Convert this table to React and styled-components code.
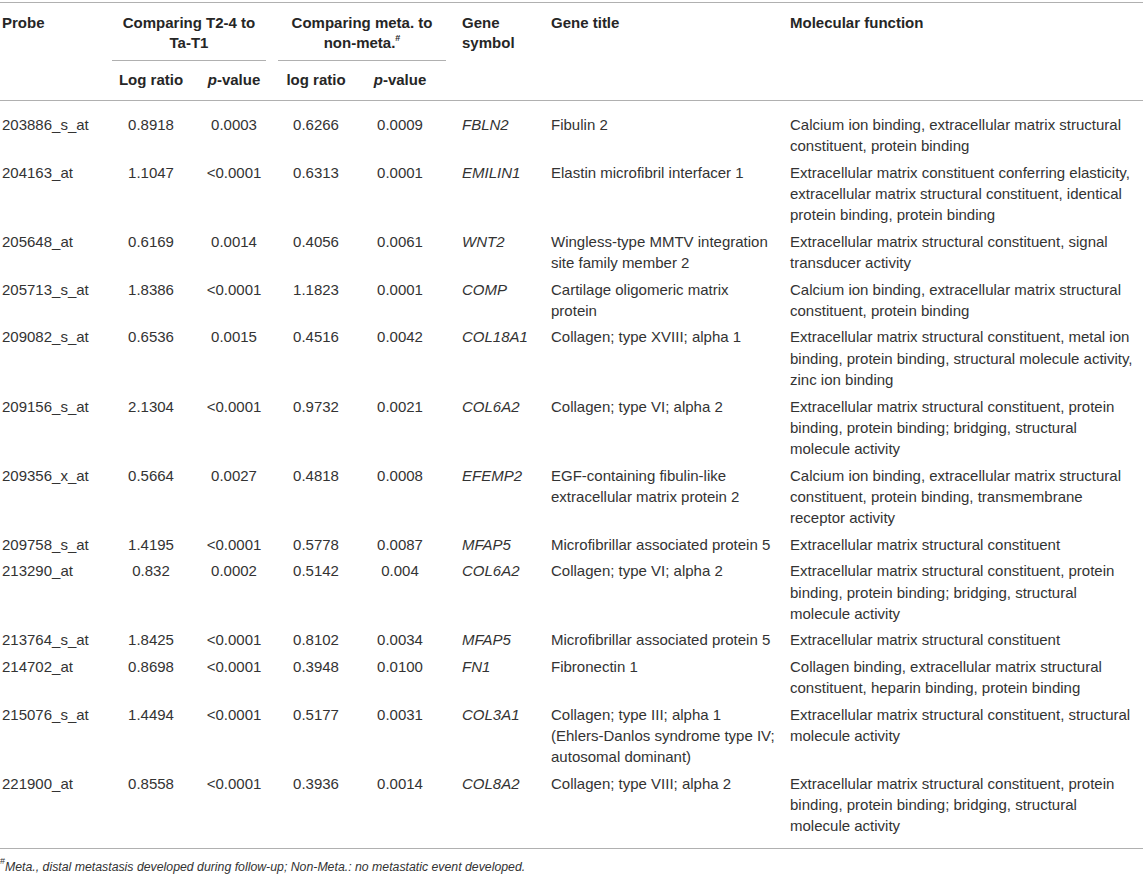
import styled, { createGlobalStyle } from 'styled-components';

const GlobalStyle = createGlobalStyle`
  body {
    margin: 0;
    background: #ffffff;
    color: #333333;
    font-family: "Liberation Sans", Arial, sans-serif;
  }
`;

const Page = styled.div`
  width: 1143px;
  padding-top: 2px;
`;

const Table = styled.table`
  width: 1143px;
  table-layout: fixed;
  border-collapse: collapse;
  border-top: 1px solid #b0b0b0;
  border-bottom: 1px solid #b0b0b0;
  font-size: 15px;
`;

const Head = styled.thead`
  border-bottom: 1px solid #b0b0b0;
`;

const HeadCell = styled.th`
  padding: ${(props) => props.$pad || '10px 6px 0 6px'};
  text-align: ${(props) => props.$align || 'left'};
  vertical-align: top;
  font-weight: bold;
  line-height: 20px;
  color: #262626;
`;

const GroupLabel = styled.div`
  margin: 0 6px;
  padding-bottom: 7px;
  border-bottom: 1px solid #b0b0b0;
  text-align: center;
`;

const SubHeadCell = styled.th`
  padding: 9px ${(props) => props.$pr || 0}px 10px 0;
  text-align: center;
  font-weight: bold;
  line-height: 20px;
  color: #262626;
`;

const Row = styled.tr`
  & > td {
    padding-top: ${(props) => (props.$first ? '13px' : '2.55px')};
    padding-bottom: ${(props) => (props.$last ? '11px' : '2.55px')};
  }
`;

const Cell = styled.td`
  padding-left: ${(props) => props.$pl || 0}px;
  padding-right: ${(props) => props.$pr || 0}px;
  text-align: ${(props) => props.$align || 'left'};
  vertical-align: top;
  line-height: 21.35px;
  font-style: ${(props) => (props.$italic ? 'italic' : 'normal')};
  white-space: nowrap;
`;

const Line = styled.span`
  display: block;
`;

const Sup = styled.sup`
  font-size: 9px;
  line-height: 0;
  vertical-align: 7px;
  font-style: normal;
`;

const Footnote = styled.p`
  margin: 10px 0 0 0;
  font-size: 12.3px;
  line-height: 16px;
  font-style: italic;
  color: #333333;
`;

const cols = [
  { w: 106, align: 'left', pl: 2, pr: 4 },
  { w: 90, align: 'center' },
  { w: 76, align: 'center' },
  { w: 88, align: 'center' },
  { w: 92, align: 'center', pr: 12 },
  { w: 93, align: 'left', pl: 10, italic: true },
  { w: 239, align: 'left', pl: 6 },
  { w: 359, align: 'left', pl: 6 },
];

const fnBridging = [
  'Extracellular matrix structural constituent, protein',
  'binding, protein binding; bridging, structural',
  'molecule activity',
];

const rows = [
  ['203886_s_at', '0.8918', '0.0003', '0.6266', '0.0009', 'FBLN2', ['Fibulin 2'],
    ['Calcium ion binding, extracellular matrix structural', 'constituent, protein binding']],
  ['204163_at', '1.1047', '<0.0001', '0.6313', '0.0001', 'EMILIN1', ['Elastin microfibril interfacer 1'],
    ['Extracellular matrix constituent conferring elasticity,', 'extracellular matrix structural constituent, identical', 'protein binding, protein binding']],
  ['205648_at', '0.6169', '0.0014', '0.4056', '0.0061', 'WNT2', ['Wingless-type MMTV integration', 'site family member 2'],
    ['Extracellular matrix structural constituent, signal', 'transducer activity']],
  ['205713_s_at', '1.8386', '<0.0001', '1.1823', '0.0001', 'COMP', ['Cartilage oligomeric matrix', 'protein'],
    ['Calcium ion binding, extracellular matrix structural', 'constituent, protein binding']],
  ['209082_s_at', '0.6536', '0.0015', '0.4516', '0.0042', 'COL18A1', ['Collagen; type XVIII; alpha 1'],
    ['Extracellular matrix structural constituent, metal ion', 'binding, protein binding, structural molecule activity,', 'zinc ion binding']],
  ['209156_s_at', '2.1304', '<0.0001', '0.9732', '0.0021', 'COL6A2', ['Collagen; type VI; alpha 2'], fnBridging],
  ['209356_x_at', '0.5664', '0.0027', '0.4818', '0.0008', 'EFEMP2', ['EGF-containing fibulin-like', 'extracellular matrix protein 2'],
    ['Calcium ion binding, extracellular matrix structural', 'constituent, protein binding, transmembrane', 'receptor activity']],
  ['209758_s_at', '1.4195', '<0.0001', '0.5778', '0.0087', 'MFAP5', ['Microfibrillar associated protein 5'],
    ['Extracellular matrix structural constituent']],
  ['213290_at', '0.832', '0.0002', '0.5142', '0.004', 'COL6A2', ['Collagen; type VI; alpha 2'], fnBridging],
  ['213764_s_at', '1.8425', '<0.0001', '0.8102', '0.0034', 'MFAP5', ['Microfibrillar associated protein 5'],
    ['Extracellular matrix structural constituent']],
  ['214702_at', '0.8698', '<0.0001', '0.3948', '0.0100', 'FN1', ['Fibronectin 1'],
    ['Collagen binding, extracellular matrix structural', 'constituent, heparin binding, protein binding']],
  ['215076_s_at', '1.4494', '<0.0001', '0.5177', '0.0031', 'COL3A1', ['Collagen; type III; alpha 1', '(Ehlers-Danlos syndrome type IV;', 'autosomal dominant)'],
    ['Extracellular matrix structural constituent, structural', 'molecule activity']],
  ['221900_at', '0.8558', '<0.0001', '0.3936', '0.0014', 'COL8A2', ['Collagen; type VIII; alpha 2'], fnBridging],
];

const App = () => {
  return (
    <Page>
      <GlobalStyle />
      <Table>
        <colgroup>
          {cols.map((c, i) => (
            <col key={i} style={{ width: c.w }} />
          ))}
        </colgroup>
        <Head>
          <tr>
            <HeadCell rowSpan={2} $pad="10px 4px 0 2px">Probe</HeadCell>
            <HeadCell colSpan={2} $pad="10px 0 0 0">
              <GroupLabel>
                Comparing T2-4 to
                <br />
                Ta-T1
              </GroupLabel>
            </HeadCell>
            <HeadCell colSpan={2} $pad="10px 0 0 0">
              <GroupLabel>
                Comparing meta. to
                <br />
                non-meta.<Sup>#</Sup>
              </GroupLabel>
            </HeadCell>
            <HeadCell rowSpan={2} $pad="10px 0 0 10px">
              Gene
              <br />
              symbol
            </HeadCell>
            <HeadCell rowSpan={2}>Gene title</HeadCell>
            <HeadCell rowSpan={2}>Molecular function</HeadCell>
          </tr>
          <tr>
            <SubHeadCell>Log ratio</SubHeadCell>
            <SubHeadCell>
              <i>p</i>-value
            </SubHeadCell>
            <SubHeadCell>log ratio</SubHeadCell>
            <SubHeadCell $pr={12}>
              <i>p</i>-value
            </SubHeadCell>
          </tr>
        </Head>
        <tbody>
          {rows.map((r, ri) => (
            <Row key={ri} $first={ri === 0} $last={ri === rows.length - 1}>
              {r.map((v, ci) => {
                const c = cols[ci];
                return (
                  <Cell key={ci} $align={c.align} $pl={c.pl} $pr={c.pr} $italic={c.italic}>
                    {Array.isArray(v) ? v.map((ln, li) => <Line key={li}>{ln}</Line>) : v}
                  </Cell>
                );
              })}
            </Row>
          ))}
        </tbody>
      </Table>
      <Footnote>
        <Sup>#</Sup>Meta., distal metastasis developed during follow-up; Non-Meta.: no metastatic event developed.
      </Footnote>
    </Page>
  );
};

export default App;
